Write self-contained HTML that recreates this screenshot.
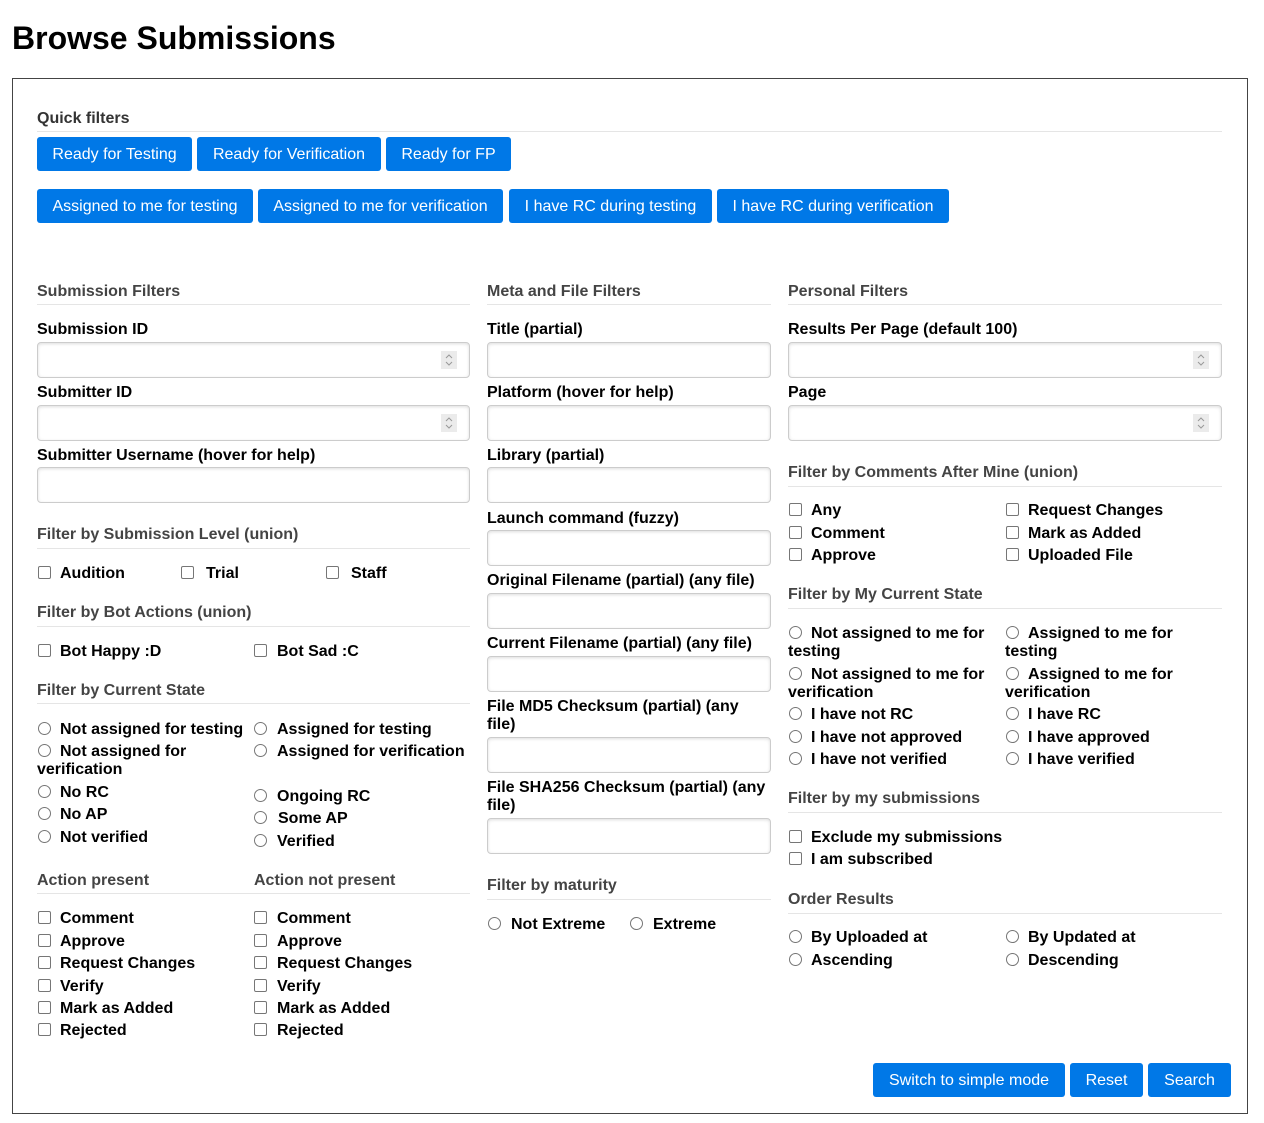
<!DOCTYPE html>
<html><head><meta charset="utf-8"><style>
*{box-sizing:border-box}
body{margin:0;width:1264px;height:1123px;background:#fff;font-family:"Liberation Sans",Arial,sans-serif;position:relative;overflow:hidden}
.a{position:absolute}
.t{position:absolute;font-weight:bold;font-size:16px;line-height:18px;color:#000;white-space:nowrap;margin-top:2px}
.h{position:absolute;font-weight:bold;font-size:16px;line-height:18px;color:#444;white-space:nowrap;margin-top:2px}
.ln{position:absolute;height:1px;background:#e5e5e5}
.in{position:absolute;height:36px;border:1px solid #ccc;border-radius:4px;background:#fff;box-shadow:inset 0 1px 3px #ddd}
.sp{position:absolute;right:12px;top:8px;width:16px;height:18px;background:#ebebeb}
.cb{position:absolute;width:13px;height:13px;border:1px solid #767676;border-radius:2px;background:#fff}
.rd{position:absolute;width:13px;height:13px;border:1px solid #767676;border-radius:50%;background:#fff}
.b{position:absolute;height:34px;background:#0078e7;color:#fff;border-radius:3px;font-size:16px;line-height:36px;text-align:center;white-space:nowrap}
</style></head><body>
<svg width="0" height="0" style="position:absolute"><defs><symbol id="s" viewBox="0 0 16 18"><path d="M5 7l3-3 3 3M5 11l3 3 3-3" fill="none" stroke="#999" stroke-width="1"/></symbol></defs></svg>
<div class="a" style="left:12px;top:18px;font-size:32px;font-weight:bold;line-height:40px">Browse Submissions</div>
<div class="a" style="left:12px;top:78px;width:1236px;height:1036px;border:1px solid #444"></div>

<div class="h" style="left:37px;top:108px;color:#333">Quick filters</div>
<div class="ln" style="left:37px;top:131px;width:1185px"></div>
<div class="b" style="left:37px;top:137px;width:155px">Ready for Testing</div>
<div class="b" style="left:197px;top:137px;width:184px">Ready for Verification</div>
<div class="b" style="left:386px;top:137px;width:125px">Ready for FP</div>
<div class="b" style="left:37px;top:189px;width:216px">Assigned to me for testing</div>
<div class="b" style="left:258px;top:189px;width:245px">Assigned to me for verification</div>
<div class="b" style="left:509px;top:189px;width:203px">I have RC during testing</div>
<div class="b" style="left:717px;top:189px;width:232px">I have RC during verification</div>

<div class="h" style="left:37px;top:281px">Submission Filters</div>
<div class="ln" style="left:37px;top:304px;width:433px"></div>
<div class="t" style="left:37px;top:319px">Submission ID</div>
<div class="in" style="left:37px;top:342px;width:433px"><svg class="sp"><use href="#s"/></svg></div>
<div class="t" style="left:37px;top:382px">Submitter ID</div>
<div class="in" style="left:37px;top:405px;width:433px"><svg class="sp"><use href="#s"/></svg></div>
<div class="t" style="left:37px;top:445px">Submitter Username (hover for help)</div>
<div class="in" style="left:37px;top:467px;width:433px"></div>
<div class="h" style="left:37px;top:524px">Filter by Submission Level (union)</div>
<div class="ln" style="left:37px;top:548px;width:433px"></div>
<div class="cb" style="left:38px;top:566px"></div><div class="t" style="left:60px;top:563px">Audition</div>
<div class="cb" style="left:181px;top:566px"></div><div class="t" style="left:206px;top:563px">Trial</div>
<div class="cb" style="left:326px;top:566px"></div><div class="t" style="left:351px;top:563px">Staff</div>
<div class="h" style="left:37px;top:602px">Filter by Bot Actions (union)</div>
<div class="ln" style="left:37px;top:626px;width:433px"></div>
<div class="cb" style="left:38px;top:644px"></div><div class="t" style="left:60px;top:641px">Bot Happy :D</div>
<div class="cb" style="left:254px;top:644px"></div><div class="t" style="left:277px;top:641px">Bot Sad :C</div>
<div class="h" style="left:37px;top:680px">Filter by Current State</div>
<div class="ln" style="left:37px;top:703px;width:433px"></div>
<div class="rd" style="left:38px;top:722px"></div><div class="t" style="left:60px;top:719px">Not assigned for testing</div>
<div class="rd" style="left:254px;top:722px"></div><div class="t" style="left:277px;top:719px">Assigned for testing</div>
<div class="rd" style="left:38px;top:744px"></div><div class="t" style="left:60px;top:741px">Not assigned for</div>
<div class="t" style="left:37px;top:759px">verification</div>
<div class="rd" style="left:254px;top:744px"></div><div class="t" style="left:277px;top:741px">Assigned for verification</div>
<div class="rd" style="left:38px;top:785px"></div><div class="t" style="left:60px;top:782px">No RC</div>
<div class="rd" style="left:254px;top:789px"></div><div class="t" style="left:277px;top:786px">Ongoing RC</div>
<div class="rd" style="left:38px;top:807px"></div><div class="t" style="left:60px;top:804px">No AP</div>
<div class="rd" style="left:254px;top:811px"></div><div class="t" style="left:278px;top:808px">Some AP</div>
<div class="rd" style="left:38px;top:830px"></div><div class="t" style="left:60px;top:827px">Not verified</div>
<div class="rd" style="left:254px;top:834px"></div><div class="t" style="left:277px;top:831px">Verified</div>
<div class="h" style="left:37px;top:870px">Action present</div>
<div class="h" style="left:254px;top:870px">Action not present</div>
<div class="ln" style="left:37px;top:893px;width:433px"></div>
<div class="cb" style="left:38px;top:911px"></div><div class="t" style="left:60px;top:908px">Comment</div>
<div class="cb" style="left:38px;top:934px"></div><div class="t" style="left:60px;top:931px">Approve</div>
<div class="cb" style="left:38px;top:956px"></div><div class="t" style="left:60px;top:953px">Request Changes</div>
<div class="cb" style="left:38px;top:979px"></div><div class="t" style="left:60px;top:976px">Verify</div>
<div class="cb" style="left:38px;top:1001px"></div><div class="t" style="left:60px;top:998px">Mark as Added</div>
<div class="cb" style="left:38px;top:1023px"></div><div class="t" style="left:60px;top:1020px">Rejected</div>
<div class="cb" style="left:254px;top:911px"></div><div class="t" style="left:277px;top:908px">Comment</div>
<div class="cb" style="left:254px;top:934px"></div><div class="t" style="left:277px;top:931px">Approve</div>
<div class="cb" style="left:254px;top:956px"></div><div class="t" style="left:277px;top:953px">Request Changes</div>
<div class="cb" style="left:254px;top:979px"></div><div class="t" style="left:277px;top:976px">Verify</div>
<div class="cb" style="left:254px;top:1001px"></div><div class="t" style="left:277px;top:998px">Mark as Added</div>
<div class="cb" style="left:254px;top:1023px"></div><div class="t" style="left:277px;top:1020px">Rejected</div>

<div class="h" style="left:487px;top:281px">Meta and File Filters</div>
<div class="ln" style="left:487px;top:304px;width:284px"></div>
<div class="t" style="left:487px;top:319px">Title (partial)</div>
<div class="in" style="left:487px;top:342px;width:284px"></div>
<div class="t" style="left:487px;top:382px">Platform (hover for help)</div>
<div class="in" style="left:487px;top:405px;width:284px"></div>
<div class="t" style="left:487px;top:445px">Library (partial)</div>
<div class="in" style="left:487px;top:467px;width:284px"></div>
<div class="t" style="left:487px;top:508px">Launch command (fuzzy)</div>
<div class="in" style="left:487px;top:530px;width:284px"></div>
<div class="t" style="left:487px;top:570px">Original Filename (partial) (any file)</div>
<div class="in" style="left:487px;top:593px;width:284px"></div>
<div class="t" style="left:487px;top:633px">Current Filename (partial) (any file)</div>
<div class="in" style="left:487px;top:656px;width:284px"></div>
<div class="t" style="left:487px;top:696px">File MD5 Checksum (partial) (any</div>
<div class="t" style="left:487px;top:714px">file)</div>
<div class="in" style="left:487px;top:737px;width:284px"></div>
<div class="t" style="left:487px;top:777px">File SHA256 Checksum (partial) (any</div>
<div class="t" style="left:487px;top:795px">file)</div>
<div class="in" style="left:487px;top:818px;width:284px"></div>
<div class="h" style="left:487px;top:875px">Filter by maturity</div>
<div class="ln" style="left:487px;top:899px;width:284px"></div>
<div class="rd" style="left:488px;top:917px"></div><div class="t" style="left:511px;top:914px">Not Extreme</div>
<div class="rd" style="left:630px;top:917px"></div><div class="t" style="left:653px;top:914px">Extreme</div>

<div class="h" style="left:788px;top:281px">Personal Filters</div>
<div class="ln" style="left:788px;top:304px;width:434px"></div>
<div class="t" style="left:788px;top:319px">Results Per Page (default 100)</div>
<div class="in" style="left:788px;top:342px;width:434px"><svg class="sp"><use href="#s"/></svg></div>
<div class="t" style="left:788px;top:382px">Page</div>
<div class="in" style="left:788px;top:405px;width:434px"><svg class="sp"><use href="#s"/></svg></div>
<div class="h" style="left:788px;top:462px">Filter by Comments After Mine (union)</div>
<div class="ln" style="left:788px;top:486px;width:434px"></div>
<div class="cb" style="left:789px;top:503px"></div><div class="t" style="left:811px;top:500px">Any</div>
<div class="cb" style="left:789px;top:526px"></div><div class="t" style="left:811px;top:523px">Comment</div>
<div class="cb" style="left:789px;top:548px"></div><div class="t" style="left:811px;top:545px">Approve</div>
<div class="cb" style="left:1006px;top:503px"></div><div class="t" style="left:1028px;top:500px">Request Changes</div>
<div class="cb" style="left:1006px;top:526px"></div><div class="t" style="left:1028px;top:523px">Mark as Added</div>
<div class="cb" style="left:1006px;top:548px"></div><div class="t" style="left:1028px;top:545px">Uploaded File</div>
<div class="h" style="left:788px;top:584px">Filter by My Current State</div>
<div class="ln" style="left:788px;top:608px;width:434px"></div>
<div class="rd" style="left:789px;top:626px"></div><div class="t" style="left:811px;top:623px">Not assigned to me for</div>
<div class="t" style="left:788px;top:641px">testing</div>
<div class="rd" style="left:1006px;top:626px"></div><div class="t" style="left:1028px;top:623px">Assigned to me for</div>
<div class="t" style="left:1005px;top:641px">testing</div>
<div class="rd" style="left:789px;top:667px"></div><div class="t" style="left:811px;top:664px">Not assigned to me for</div>
<div class="t" style="left:788px;top:682px">verification</div>
<div class="rd" style="left:1006px;top:667px"></div><div class="t" style="left:1028px;top:664px">Assigned to me for</div>
<div class="t" style="left:1005px;top:682px">verification</div>
<div class="rd" style="left:789px;top:707px"></div><div class="t" style="left:811px;top:704px">I have not RC</div>
<div class="rd" style="left:1006px;top:707px"></div><div class="t" style="left:1028px;top:704px">I have RC</div>
<div class="rd" style="left:789px;top:730px"></div><div class="t" style="left:811px;top:727px">I have not approved</div>
<div class="rd" style="left:1006px;top:730px"></div><div class="t" style="left:1028px;top:727px">I have approved</div>
<div class="rd" style="left:789px;top:752px"></div><div class="t" style="left:811px;top:749px">I have not verified</div>
<div class="rd" style="left:1006px;top:752px"></div><div class="t" style="left:1028px;top:749px">I have verified</div>
<div class="h" style="left:788px;top:788px">Filter by my submissions</div>
<div class="ln" style="left:788px;top:812px;width:434px"></div>
<div class="cb" style="left:789px;top:830px"></div><div class="t" style="left:811px;top:827px">Exclude my submissions</div>
<div class="cb" style="left:789px;top:852px"></div><div class="t" style="left:811px;top:849px">I am subscribed</div>
<div class="h" style="left:788px;top:889px">Order Results</div>
<div class="ln" style="left:788px;top:913px;width:434px"></div>
<div class="rd" style="left:789px;top:930px"></div><div class="t" style="left:811px;top:927px">By Uploaded at</div>
<div class="rd" style="left:1006px;top:930px"></div><div class="t" style="left:1028px;top:927px">By Updated at</div>
<div class="rd" style="left:789px;top:953px"></div><div class="t" style="left:811px;top:950px">Ascending</div>
<div class="rd" style="left:1006px;top:953px"></div><div class="t" style="left:1028px;top:950px">Descending</div>

<div class="b" style="left:873px;top:1063px;width:192px">Switch to simple mode</div>
<div class="b" style="left:1070px;top:1063px;width:73px">Reset</div>
<div class="b" style="left:1148px;top:1063px;width:83px">Search</div>
</body></html>
